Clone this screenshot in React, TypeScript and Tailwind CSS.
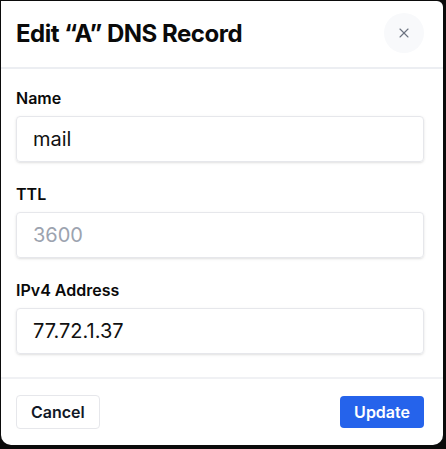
import { X } from 'lucide-react';

const fields = [
  { label: 'Name', value: 'mail', placeholder: '' },
  { label: 'TTL', value: '', placeholder: '3600' },
  { label: 'IPv4 Address', value: '77.72.1.37', placeholder: '' },
];

export default function App() {
  return (
    <div className="w-[446px] h-[449px] bg-[#0b0b0b] pl-px pt-px" style={{ fontFamily: 'Inter, "Noto Sans", sans-serif' }}>
      <div className="w-[442px] h-[444px] bg-white rounded-tr-[6px] rounded-b-[10px] flex flex-col overflow-hidden">
        {/* header */}
        <div className="h-[68px] pl-[15px] pr-[19px] flex items-center justify-between border-b-2 border-[#eceef2]">
          <h2 className="text-[24px] font-bold text-[#0a0a0a] tracking-[-0.02em]">Edit “A” DNS Record</h2>
          <button className="w-10 h-10 -mt-[3px] rounded-full bg-[#f8f9fb] flex items-center justify-center text-[#6b7280]">
            <X size={16} strokeWidth={1.6} />
          </button>
        </div>

        {/* body */}
        <div className="pl-[15px] pr-[19px] pt-[17px] pb-[23px] flex flex-col gap-5 border-b-2 border-[#f0f1f4]">
          {fields.map((f, i) => (
            <div key={i} className="flex flex-col gap-[6px]">
              <label className="text-[16px] leading-6 font-semibold text-[#0a0a0a]">{f.label}</label>
              <input
                readOnly
                value={f.value}
                placeholder={f.placeholder}
                className="h-[46px] w-full px-4 border border-[#e6e7eb] rounded-[4px] shadow-sm text-[20px] text-[#111] placeholder:text-[#9ca3af] outline-none"
              />
            </div>
          ))}
        </div>

        {/* footer */}
        <div className="pl-[15px] pr-[19px] pt-[16px] flex items-start justify-between">
          <button className="h-[34px] px-[14px] border border-[#e6e7eb] rounded-[4px] text-[16px] font-semibold text-[#111827]">
            Cancel
          </button>
          <button className="h-[32px] mt-px px-[14px] bg-[#2563eb] rounded-[4px] text-[16px] font-semibold text-white">
            Update
          </button>
        </div>
      </div>
    </div>
  );
}
